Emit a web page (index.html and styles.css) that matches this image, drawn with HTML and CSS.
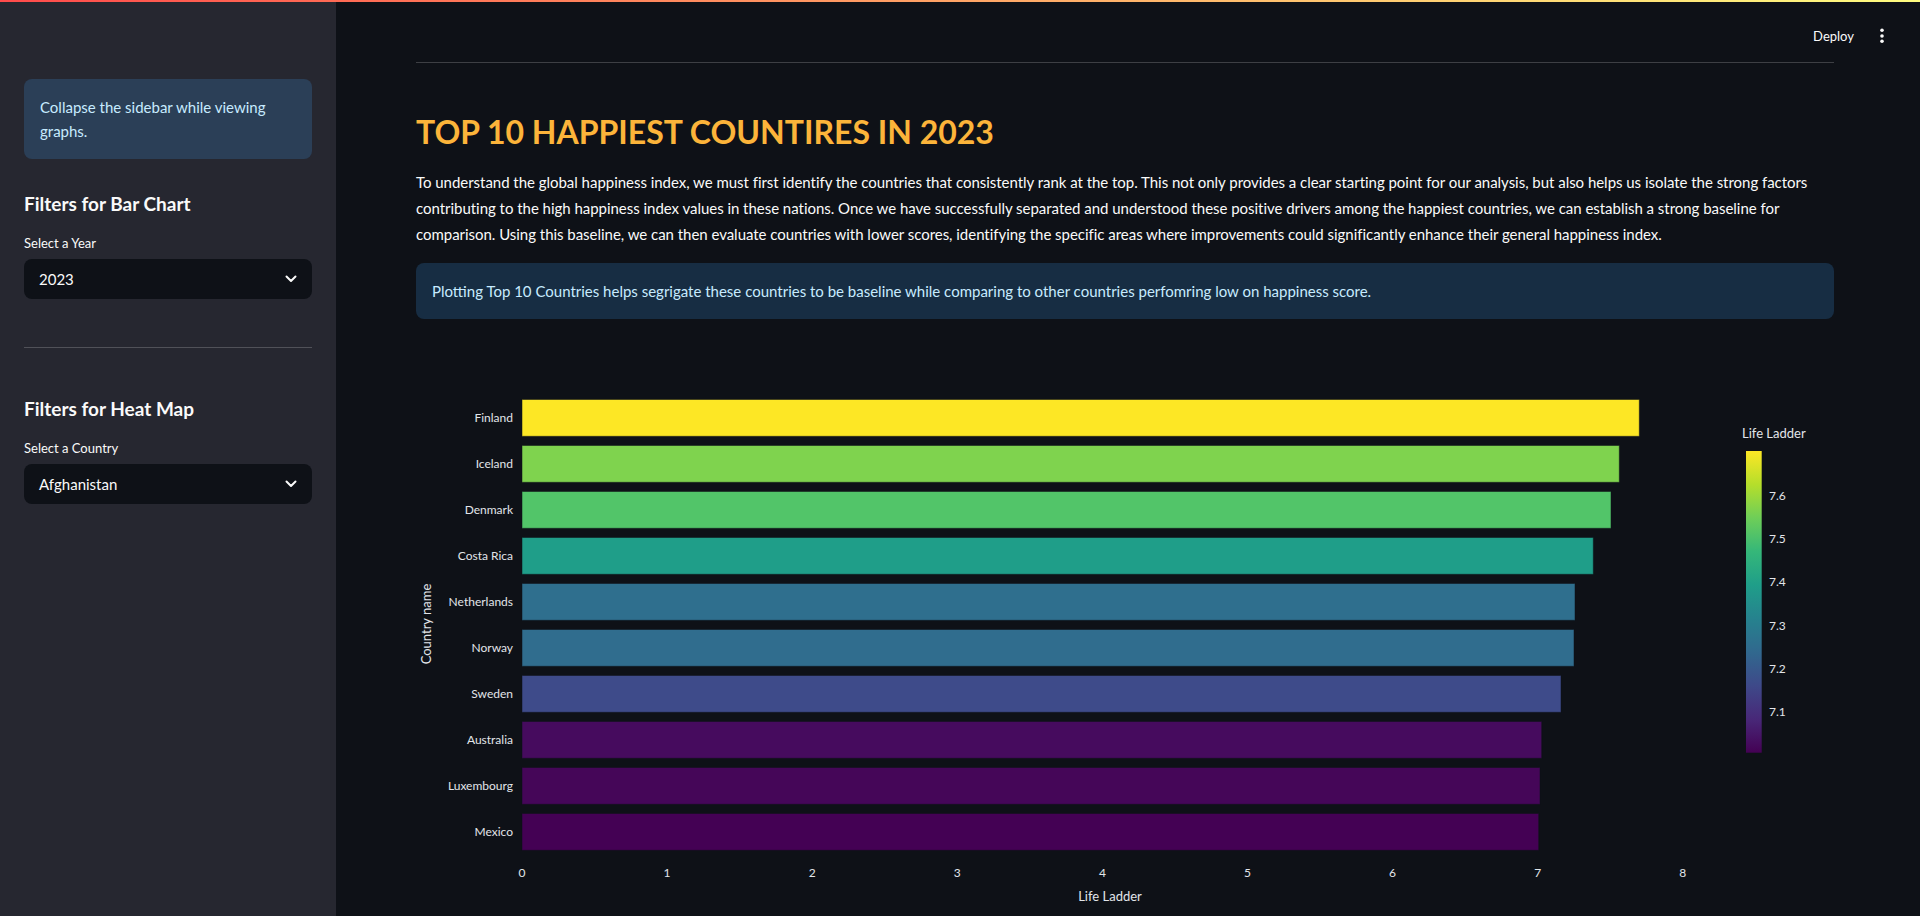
FILE: index.html
```html
<!DOCTYPE html>
<html lang="en">
<head>
<meta charset="utf-8">
<title>Top 10 Happiest Countries</title>
<link rel="stylesheet" href="styles.css">
</head>
<body>
<div class="decoration"></div>
<div class="app">
  <aside class="sidebar">
    <div class="note">Collapse the sidebar while viewing graphs.</div>
    <h3 class="group-title">Filters for Bar Chart</h3>
    <div class="field-label">Select a Year</div>
    <div class="select"><span>2023</span>
      <svg class="chev" width="12" height="8" viewBox="0 0 12 8"><path d="M1.5 1.5 L6 6 L10.5 1.5" fill="none" stroke="#fafafa" stroke-width="2" stroke-linecap="round" stroke-linejoin="round"/></svg>
    </div>
    <div class="divider"></div>
    <h3 class="group-title group-title--after-divider">Filters for Heat Map</h3>
    <div class="field-label">Select a Country</div>
    <div class="select"><span>Afghanistan</span>
      <svg class="chev" width="12" height="8" viewBox="0 0 12 8"><path d="M1.5 1.5 L6 6 L10.5 1.5" fill="none" stroke="#fafafa" stroke-width="2" stroke-linecap="round" stroke-linejoin="round"/></svg>
    </div>
  </aside>
  <main class="main">
    <header class="header">
      <span class="deploy">Deploy</span>
      <svg class="kebab" width="4" height="16" viewBox="0 0 4 16"><circle cx="2" cy="2.3" r="1.8" fill="#fafafa"/><circle cx="2" cy="8" r="1.8" fill="#fafafa"/><circle cx="2" cy="13.3" r="1.8" fill="#fafafa"/></svg>
    </header>
    <section class="content">
      <div class="rule"></div>
      <h2 class="title">TOP 10 HAPPIEST COUNTIRES IN 2023</h2>
      <p class="lead">To understand the global happiness index, we must first identify the countries that consistently rank at the top. This not only provides a clear starting point for our analysis, but also helps us isolate the strong factors contributing to the high happiness index values in these nations. Once we have successfully separated and understood these positive drivers among the happiest countries, we can establish a strong baseline for comparison. Using this baseline, we can then evaluate countries with lower scores, identifying the specific areas where improvements could significantly enhance their general happiness index.</p>
      <div class="callout">Plotting Top 10 Countries helps segrigate these countries to be baseline while comparing to other countries perfomring low on happiness score.</div>
      <svg class="chart" width="1418" height="581" viewBox="0 0 1418 581">
        <defs>
          <linearGradient id="viridis" x1="0" y1="1" x2="0" y2="0">
            <stop offset="0" stop-color="#440154"/>
            <stop offset="0.111" stop-color="#482878"/>
            <stop offset="0.222" stop-color="#3e4989"/>
            <stop offset="0.333" stop-color="#31688e"/>
            <stop offset="0.444" stop-color="#26828e"/>
            <stop offset="0.556" stop-color="#1f9e89"/>
            <stop offset="0.667" stop-color="#35b779"/>
            <stop offset="0.778" stop-color="#6ece58"/>
            <stop offset="0.889" stop-color="#b5de2b"/>
            <stop offset="1" stop-color="#fde725"/>
          </linearGradient>
        </defs>
        <g class="bars" stroke="#0e1117" stroke-opacity="0.5" stroke-width="1">
          <rect x="106" y="64.5" width="1117.3" height="36.8" fill="#fde725"/>
          <rect x="106" y="110.5" width="1097.3" height="36.8" fill="#7fd34e"/>
          <rect x="106" y="156.5" width="1089" height="36.8" fill="#52c569"/>
          <rect x="106" y="202.5" width="1071.3" height="36.8" fill="#1f9e89"/>
          <rect x="106" y="248.5" width="1053" height="36.8" fill="#2f6f8e"/>
          <rect x="106" y="294.5" width="1052" height="36.8" fill="#306d8e"/>
          <rect x="106" y="340.5" width="1039" height="36.8" fill="#3e4b8a"/>
          <rect x="106" y="386.5" width="1019.7" height="36.8" fill="#460b5e"/>
          <rect x="106" y="432.5" width="1018" height="36.8" fill="#450658"/>
          <rect x="106" y="478.5" width="1016.7" height="36.8" fill="#440154"/>
        </g>
        <g class="ytick" text-anchor="end">
          <text x="97" y="82.9">Finland</text>
          <text x="97" y="128.9">Iceland</text>
          <text x="97" y="174.9">Denmark</text>
          <text x="97" y="220.9">Costa Rica</text>
          <text x="97" y="266.9">Netherlands</text>
          <text x="97" y="312.9">Norway</text>
          <text x="97" y="358.9">Sweden</text>
          <text x="97" y="404.9">Australia</text>
          <text x="97" y="450.9">Luxembourg</text>
          <text x="97" y="496.9">Mexico</text>
        </g>
        <g class="xtick" text-anchor="middle">
          <text x="106" y="537">0</text>
          <text x="251.1" y="537">1</text>
          <text x="396.2" y="537">2</text>
          <text x="541.3" y="537">3</text>
          <text x="686.4" y="537">4</text>
          <text x="831.5" y="537">5</text>
          <text x="976.6" y="537">6</text>
          <text x="1121.7" y="537">7</text>
          <text x="1266.8" y="537">8</text>
        </g>
        <text class="axis-title" x="694" y="561" text-anchor="middle">Life Ladder</text>
        <text class="axis-title" transform="translate(10 289) rotate(-90)" text-anchor="middle">Country name</text>
        <text class="axis-title" x="1326" y="98">Life Ladder</text>
        <rect x="1330" y="116" width="15.7" height="301.7" fill="url(#viridis)"/>
        <g class="ctick">
          <text x="1353" y="160">7.6</text>
          <text x="1353" y="203.3">7.5</text>
          <text x="1353" y="246.7">7.4</text>
          <text x="1353" y="290">7.3</text>
          <text x="1353" y="333.4">7.2</text>
          <text x="1353" y="376.8">7.1</text>
        </g>
      </svg>
    </section>
  </main>
</div>
</body>
</html>
```
FILE: styles.css
```css
* { box-sizing: border-box; margin: 0; padding: 0; }
html, body { height: 100%; }
body {
  background: #0e1117;
  color: #fafafa;
  font-family: Lato, "Noto Sans", sans-serif;
  overflow: hidden;
}
.decoration {
  position: absolute;
  top: 0; left: 0; right: 0;
  height: 2px;
  background: linear-gradient(90deg, #ff4b4b, #fffd80);
  z-index: 5;
}
.app { display: flex; height: 916px; }
.sidebar {
  width: 336px;
  flex: none;
  background: #262730;
  padding: 79px 24px 0;
}
.note {
  background: #2b3f57;
  color: #c7ebff;
  border-radius: 8px;
  padding: 16px;
  font-size: 15px;
  line-height: 24px;
}
.group-title {
  margin-top: 32.5px;
  font-size: 19px;
  line-height: 24px;
  font-weight: 700;
}
.group-title--after-divider { margin-top: 48.7px; }
.field-label {
  margin-top: 17.5px;
  font-size: 13px;
  line-height: 20px;
}
.select {
  margin-top: 6px;
  height: 40px;
  background: #0e1117;
  border-radius: 8px;
  display: flex;
  align-items: center;
  justify-content: space-between;
  padding: 0 15px 0 15px;
  font-size: 15px;
}
.divider {
  margin-top: 48px;
  height: 1px;
  background: rgba(250, 250, 250, 0.2);
}
.main { flex: 1; display: flex; flex-direction: column; min-width: 0; }
.header {
  flex: none;
  height: 60px;
  padding: 12px 36px 0 0;
  display: flex;
  justify-content: flex-end;
  align-items: center;
  gap: 26px;
}
.deploy { font-size: 13px; }
.content { flex: none; padding: 0 86px 0 80px; }
.rule {
  margin-top: 2px;
  height: 1px;
  background: rgba(250, 250, 250, 0.2);
}
.title {
  margin-top: 50.6px;
  font-size: 32px;
  line-height: 36px;
  font-weight: 700;
  color: #fcb43a;
}
.lead {
  margin-top: 19.3px;
  font-size: 15px;
  line-height: 26px;
  letter-spacing: -0.03px;
}
.callout {
  margin-top: 16.5px;
  background: #172d43;
  color: #c7ebff;
  border-radius: 8px;
  padding: 16px;
  font-size: 15px;
  line-height: 24px;
}
.chart { display: block; margin-top: 16px; font-family: Lato, "Noto Sans", sans-serif; }
.chart text { fill: #e2e5ea; dominant-baseline: central; }
.ytick text, .xtick text, .ctick text { font-size: 12px; }
.axis-title { font-size: 13px; }
```
